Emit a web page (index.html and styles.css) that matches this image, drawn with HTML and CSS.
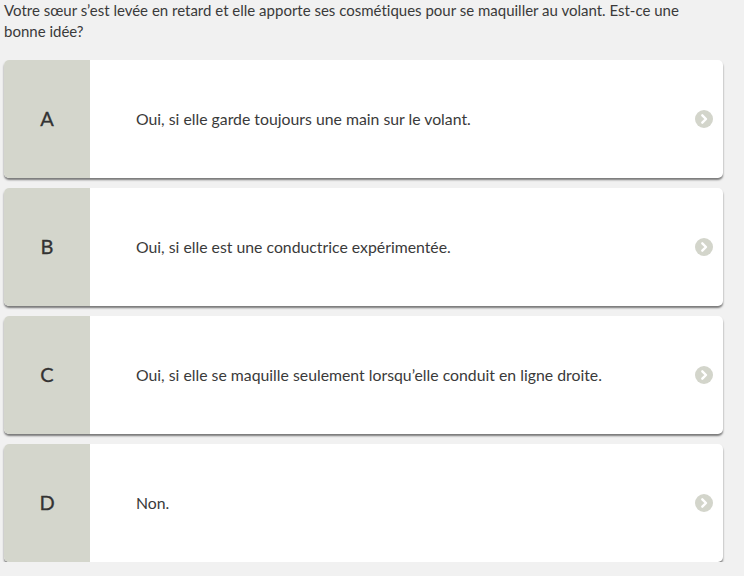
FILE: index.html
```html
<!DOCTYPE html>
<html lang="fr">
<head>
<meta charset="utf-8">
<link rel="stylesheet" href="styles.css">
</head>
<body>
<div class="quiz">
  <p class="question">Votre sœur s’est levée en retard et elle apporte ses cosmétiques pour se maquiller au volant. Est-ce une bonne idée?</p>
  <div class="answers">
    <div class="answer">
      <div class="letter">A</div>
      <div class="text">Oui, si elle garde toujours une main sur le volant.</div>
      <svg class="arrow" width="18" height="18" viewBox="0 0 18 18"><circle cx="9" cy="9" r="9" fill="#d3d5cb"/><path d="M7.3 5.3 L11 9 L7.3 12.7" fill="none" stroke="#fff" stroke-width="2.4" stroke-linecap="round" stroke-linejoin="round"/></svg>
    </div>
    <div class="answer">
      <div class="letter">B</div>
      <div class="text">Oui, si elle est une conductrice expérimentée.</div>
      <svg class="arrow" width="18" height="18" viewBox="0 0 18 18"><circle cx="9" cy="9" r="9" fill="#d3d5cb"/><path d="M7.3 5.3 L11 9 L7.3 12.7" fill="none" stroke="#fff" stroke-width="2.4" stroke-linecap="round" stroke-linejoin="round"/></svg>
    </div>
    <div class="answer">
      <div class="letter">C</div>
      <div class="text">Oui, si elle se maquille seulement lorsqu’elle conduit en ligne droite.</div>
      <svg class="arrow" width="18" height="18" viewBox="0 0 18 18"><circle cx="9" cy="9" r="9" fill="#d3d5cb"/><path d="M7.3 5.3 L11 9 L7.3 12.7" fill="none" stroke="#fff" stroke-width="2.4" stroke-linecap="round" stroke-linejoin="round"/></svg>
    </div>
    <div class="answer">
      <div class="letter">D</div>
      <div class="text">Non.</div>
      <svg class="arrow" width="18" height="18" viewBox="0 0 18 18"><circle cx="9" cy="9" r="9" fill="#d3d5cb"/><path d="M7.3 5.3 L11 9 L7.3 12.7" fill="none" stroke="#fff" stroke-width="2.4" stroke-linecap="round" stroke-linejoin="round"/></svg>
    </div>
  </div>
</div>
</body>
</html>
```

FILE: styles.css
```css
html, body {
  margin: 0;
  padding: 0;
  background: #f1f1f1;
}
body {
  font-family: Lato, "Open Sans", sans-serif;
  color: #3a3a3a;
  font-variant-ligatures: none;
}
.quiz {
  width: 719px;
  padding-left: 4px;
}
.question {
  margin: 0 0 18px 0;
  font-size: 15px;
  line-height: 21px;
}
.answers {
  display: flex;
  flex-direction: column;
  gap: 10px;
}
.answer {
  display: flex;
  align-items: center;
  height: 118px;
  background: #fff;
  border-radius: 5px;
  overflow: hidden;
  box-shadow: 0 2px 2px rgba(0,0,0,0.5);
}
.letter {
  width: 86px;
  align-self: stretch;
  display: flex;
  align-items: center;
  justify-content: center;
  background: #d4d6cc;
  font-size: 20px;
  color: #333;
  padding-bottom: 3px;
  box-sizing: border-box;
  -webkit-text-stroke: 0.3px #333;
}
.text {
  flex: 1;
  padding-left: 46px;
  padding-bottom: 2px;
  font-size: 15.8px;
  color: #3a3a3a;
}
.arrow {
  margin-right: 10px;
  flex: none;
}
```
